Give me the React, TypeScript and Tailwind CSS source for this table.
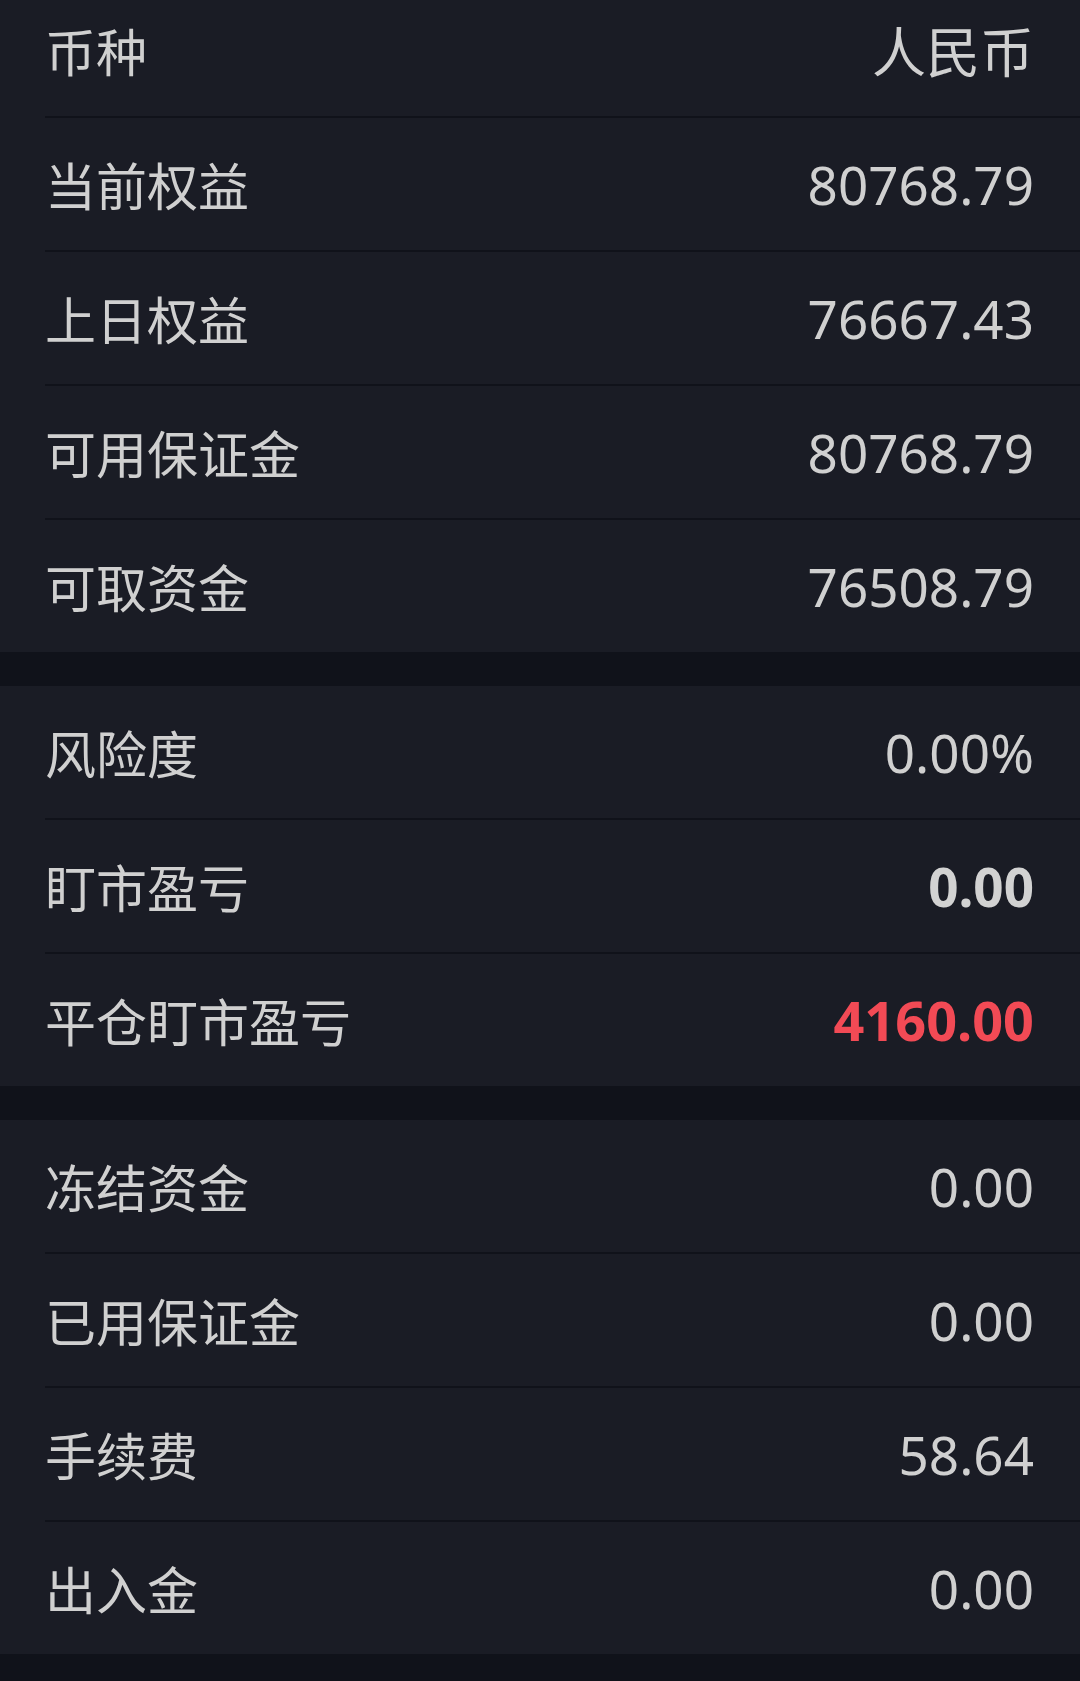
import React from "react";

type Row = { label: string; value: string; kind?: "bold" | "red" };

const sections: Row[][] = [
  [
    { label: "币种", value: "人民币" },
    { label: "当前权益", value: "80768.79" },
    { label: "上日权益", value: "76667.43" },
    { label: "可用保证金", value: "80768.79" },
    { label: "可取资金", value: "76508.79" },
  ],
  [
    { label: "风险度", value: "0.00%" },
    { label: "盯市盈亏", value: "0.00", kind: "bold" },
    { label: "平仓盯市盈亏", value: "4160.00", kind: "red" },
  ],
  [
    { label: "冻结资金", value: "0.00" },
    { label: "已用保证金", value: "0.00" },
    { label: "手续费", value: "58.64" },
    { label: "出入金", value: "0.00" },
  ],
];

const cjk = { fontFamily: '"Noto Sans CJK SC", "Noto Sans", sans-serif' };
const num = { fontFamily: '"Noto Sans", "Noto Sans CJK SC", sans-serif' };

function Item({ row, last }: { row: Row; last: boolean }) {
  const isCjk = /[\u4e00-\u9fff]/.test(row.value);
  const valueClass =
    row.kind === "red"
      ? "text-[54px] text-[#f24a55] font-bold"
      : row.kind === "bold"
      ? "text-[53px] text-[#d2d2d2] font-bold"
      : isCjk
      ? "text-[54px] text-[#d0d0d0]"
      : "text-[53px] text-[#d0d0d0]";
  return (
    <div className="pl-[45px]">
      <div className="flex h-[132px] items-center justify-between pr-[46px]">
        <span className="text-[51px] leading-none text-[#d0d0d0]" style={cjk}>
          {row.label}
        </span>
        <span
          className={`leading-none ${valueClass}`}
          style={isCjk ? cjk : num}
        >
          {row.value}
        </span>
      </div>
      {!last && <div className="h-[2px] bg-[#10121a]" />}
    </div>
  );
}

export default function App() {
  return (
    <div className="h-[1681px] w-[1080px] overflow-hidden bg-[#10121a]">
      <div className="-mt-[16px] flex flex-col gap-[34px]">
        {sections.map((sec, i) => (
          <div key={i} className="bg-[#1a1c25]">
            {sec.map((r, j) => (
              <Item key={j} row={r} last={j === sec.length - 1} />
            ))}
          </div>
        ))}
      </div>
    </div>
  );
}
